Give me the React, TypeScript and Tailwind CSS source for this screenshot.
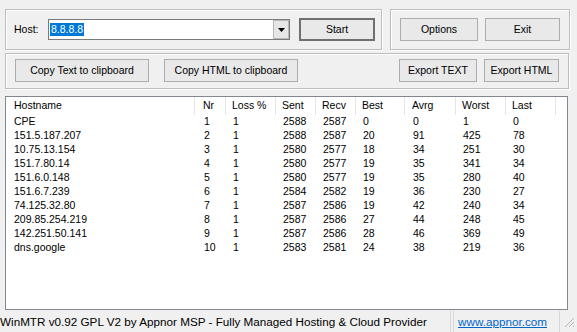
import React from 'react'

const columns = [
  { label: 'Hostname', w: 'w-[189px]', pad: 'pl-[8px]' },
  { label: 'Nr', w: 'w-[31px]', pad: 'pl-[8px]' },
  { label: 'Loss %', w: 'w-[50px]', pad: 'pl-[6px]' },
  { label: 'Sent', w: 'w-[40px]', pad: 'pl-[6px]' },
  { label: 'Recv', w: 'w-[40px]', pad: 'pl-[6px]' },
  { label: 'Best', w: 'w-[49px]', pad: 'pl-[6px]' },
  { label: 'Avrg', w: 'w-[51px]', pad: 'pl-[7px]' },
  { label: 'Worst', w: 'w-[50px]', pad: 'pl-[6px]' },
  { label: 'Last', w: 'w-[50px]', pad: 'pl-[6px]' },
]

const hops = [
  ['CPE', '1', '1', '2588', '2587', '0', '0', '1', '0'],
  ['151.5.187.207', '2', '1', '2588', '2587', '20', '91', '425', '78'],
  ['10.75.13.154', '3', '1', '2580', '2577', '18', '34', '251', '30'],
  ['151.7.80.14', '4', '1', '2580', '2577', '19', '35', '341', '34'],
  ['151.6.0.148', '5', '1', '2580', '2577', '19', '35', '280', '40'],
  ['151.6.7.239', '6', '1', '2584', '2582', '19', '36', '230', '27'],
  ['74.125.32.80', '7', '1', '2587', '2586', '19', '42', '240', '34'],
  ['209.85.254.219', '8', '1', '2587', '2586', '27', '44', '248', '45'],
  ['142.251.50.141', '9', '1', '2587', '2586', '28', '46', '369', '49'],
  ['dns.google', '10', '1', '2583', '2581', '24', '38', '219', '36'],
]

function Btn({ label, w, primary = false }: { label: string; w: string; primary?: boolean }) {
  return (
    <button
      className={`${w} h-[23px] flex items-center justify-center bg-[#e9e9e9] text-black ${
        primary ? 'border-2 border-[#707070]' : 'border border-[#adadad]'
      }`}
    >
      {label}
    </button>
  )
}

// etched group box, like the win32 frame
const groupBox = 'border border-[#bdbdbd] shadow-[inset_1px_1px_0_#ffffff,1px_1px_0_#ffffff]'

export default function App() {
  return (
    <div className="w-[577px] h-[332px] overflow-hidden bg-[#f0f0f0] flex flex-col text-[10.5px] text-black font-['Liberation_Sans',Arial,sans-serif]">
      {/* top controls */}
      <div className="flex gap-[8px] pl-[5px] pt-[9px]">
        <div className={`${groupBox} w-[377px] h-[41px] flex items-center pl-[8px]`}>
          <span className="w-[34px]">Host:</span>
          <div className="w-[242px] h-[21px] flex bg-white border border-[#7a7a7a]">
            <div className="flex-1 flex items-center pl-[1px]">
              <span className="bg-[#0078d7] text-white px-[1px] leading-[13px]">8.8.8.8</span>
            </div>
            <div className="w-[16px] h-[19px] bg-[#e6e6e6] border border-[#b8b8b8] flex items-center justify-center">
              <svg width="7" height="4" viewBox="0 0 7 4">
                <path d="M0 0h7L3.5 4z" fill="#000" />
              </svg>
            </div>
          </div>
          <div className="ml-[9px]">
            <Btn label="Start" w="w-[76px]" primary />
          </div>
        </div>
        <div className={`${groupBox} w-[180px] h-[41px] flex items-center gap-[7px] pl-[9px]`}>
          <Btn label="Options" w="w-[78px]" />
          <Btn label="Exit" w="w-[75px]" />
        </div>
      </div>

      <div className={`${groupBox} ml-[5px] mt-[3px] w-[564px] h-[37px] flex items-center pl-[9px] pr-[9px]`}>
        <Btn label="Copy Text to clipboard" w="w-[134px]" />
        <div className="ml-[15px]">
          <Btn label="Copy HTML to clipboard" w="w-[134px]" />
        </div>
        <div className="ml-auto flex gap-[7px]">
          <Btn label="Export TEXT" w="w-[78px]" />
          <Btn label="Export HTML" w="w-[75px]" />
        </div>
      </div>

      {/* hop list */}
      <div className="ml-[5px] mt-[7px] w-[563px] h-[220px] bg-white border border-[#828790] flex flex-col">
        <div className="flex h-[18px] items-center">
          {columns.map((c) => (
            <div key={c.label} className={`${c.w} ${c.pad} h-full flex items-center border-r border-[#e5e5e5]`}>
              {c.label}
            </div>
          ))}
        </div>
        <div className="flex flex-col">
          {hops.map((row) => (
            <div key={row[1]} className="flex h-[14px] items-center">
              {row.map((v, i) => (
                <div key={i} className={`${columns[i].w} ${columns[i].pad} ${i > 0 ? 'ml-[1px] -mr-[1px]' : ''}`}>
                  {v}
                </div>
              ))}
            </div>
          ))}
        </div>
      </div>

      {/* status bar */}
      <div className="mt-[1px] h-[22px] flex items-center text-[11.7px]">
        <div className="w-[451px] h-full flex items-center border-r border-[#d7d7d7] whitespace-nowrap overflow-hidden">
          WinMTR v0.92 GPL V2 by Appnor MSP - Fully Managed Hosting &amp; Cloud Provider
        </div>
        <div className="ml-[2px] w-[107px] h-full flex items-center pl-[4px] border-l border-r border-[#d7d7d7]">
          <span className="text-[#0066cc] underline">www.appnor.com</span>
        </div>
        <div className="flex-1 h-full flex items-start justify-end pr-[2px] pt-[6px]">
          <svg width="11" height="11" viewBox="0 0 11 11">
            <path d="M10 1L1 10M10 5L5 10M10 9L9 10" stroke="#b4b4b4" strokeWidth="1" />
          </svg>
        </div>
      </div>
    </div>
  )
}
